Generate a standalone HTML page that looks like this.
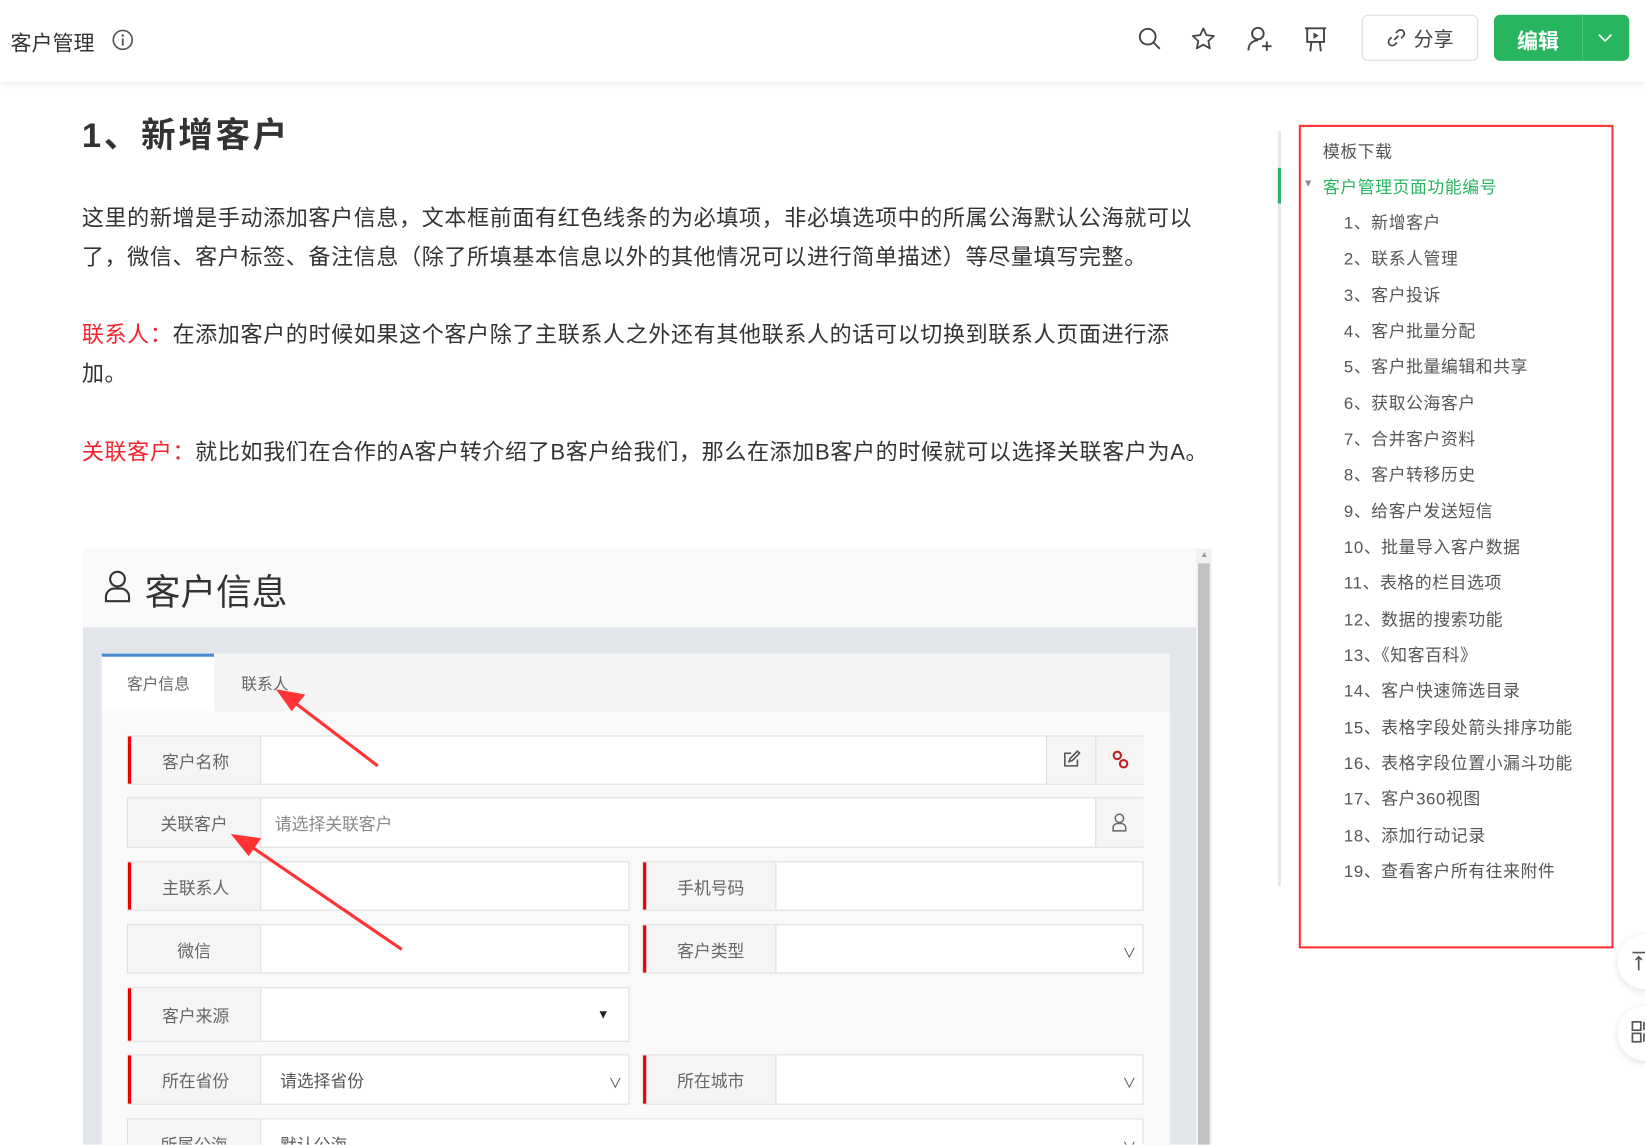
<!DOCTYPE html>
<html><head><meta charset="utf-8">
<style>
*{margin:0;padding:0;box-sizing:border-box}
html,body{width:1645px;height:1144px;overflow:hidden;background:#fff}
body{font-family:"Liberation Sans","Noto Sans CJK SC",sans-serif;color:#333}
#w{position:absolute;left:0;top:0;width:1568px;height:1091px;transform:scale(1.04911);transform-origin:0 0}
.a{position:absolute;white-space:nowrap}
.hdr{position:absolute;left:0;top:0;width:1568px;height:78px;background:#fff;box-shadow:0 2px 6px rgba(0,0,0,.08)}
p.t{position:absolute;left:78px;width:1070px;font-size:21px;letter-spacing:.6px;line-height:37px;color:#333;white-space:normal}
.red{color:#f5222d}
.toc div{position:absolute;font-size:16px;letter-spacing:.6px;color:#555;white-space:nowrap}
.row{position:absolute;height:47px;border:1px solid #ddd;background:#fff}
.row .lb{position:absolute;left:0;top:0;bottom:0;width:127px;background:#f5f5f5;border-right:1px solid #ddd;font-size:16px;color:#666;text-align:center;display:flex;align-items:center;justify-content:center}
.row.r .lb{border-left:3px solid #e00}
.row .ph{position:absolute;left:140px;top:0;bottom:0;display:flex;align-items:center;font-size:16px;color:#888}
.chev{position:absolute;right:6px;top:50%;margin-top:-7px;font-size:13px;color:#555}
</style></head><body><div id="w">
<div class="hdr">
 <div class="a" style="left:10px;top:25px;font-size:20px;color:#333">客户管理</div>
 <svg class="a" style="left:106px;top:27px" width="22" height="22" viewBox="0 0 22 22"><circle cx="11" cy="11" r="9" fill="none" stroke="#555" stroke-width="1.6"/><circle cx="11" cy="6.8" r="1.2" fill="#555"/><path d="M11 9.5v7" stroke="#555" stroke-width="1.7"/></svg>
 <svg class="a" style="left:1084px;top:25px" width="24" height="24" viewBox="0 0 24 24" fill="none" stroke="#444" stroke-width="1.8"><circle cx="10" cy="10" r="7.5"/><path d="M15.5 15.5l6 6"/></svg>
 <svg class="a" style="left:1135px;top:25px" width="24" height="24" viewBox="0 0 24 24" fill="none" stroke="#444" stroke-width="1.7" stroke-linejoin="round"><path d="M12 2l3 6.5 7 .8-5.2 4.8 1.4 7L12 17.6 5.8 21.1l1.4-7L2 9.3l7-.8z"/></svg>
 <svg class="a" style="left:1188px;top:24px" width="26" height="26" viewBox="0 0 26 26" fill="none" stroke="#444" stroke-width="1.8"><circle cx="11" cy="8" r="5.5"/><path d="M2 24c0-6 4-9.5 9-9.5M15 20h9M19.5 15.5v9"/></svg>
 <svg class="a" style="left:1242px;top:25px" width="24" height="26" viewBox="0 0 24 26" fill="none" stroke="#444" stroke-width="1.8"><path d="M2 2h20M4 2v13h16V2M8 15l-1 9M16 15l1 9"/><path d="M10 6l5 3-5 3z" fill="#444" stroke="none"/></svg>
 <div class="a" style="left:1298px;top:14px;width:111px;height:44px;border:1px solid #ddd;border-radius:6px;font-size:19px;color:#444;display:flex;align-items:center;justify-content:center"><svg width="20" height="20" viewBox="0 0 20 20" fill="none" stroke="#444" stroke-width="1.6" style="margin-right:6px"><path d="M8 12l4-4M9.5 5.5l2-2a3.5 3.5 0 015 5l-2 2M10.5 14.5l-2 2a3.5 3.5 0 01-5-5l2-2"/></svg>分享</div>
 <div class="a" style="left:1424px;top:14px;width:129px;height:44px;border-radius:6px;background:#27b560"></div>
 <div class="a" style="left:1424px;top:23px;width:84px;text-align:center;font-size:20px;color:#fff;font-weight:bold">编辑</div>
 <div class="a" style="left:1508px;top:14px;width:1px;height:44px;background:#4cc47c"></div>
 <svg class="a" style="left:1523px;top:31px" width="14" height="10" viewBox="0 0 14 10" fill="none" stroke="#fff" stroke-width="1.6"><path d="M1 2l6 6 6-6"/></svg>
</div>

<div class="a" style="left:78px;top:102px;font-size:33px;letter-spacing:2.5px;color:#333;font-weight:bold">1、新增客户</div>
<p class="t" style="top:190px">这里的新增是手动添加客户信息，文本框前面有红色线条的为必填项，非必填选项中的所属公海默认公海就可以了，微信、客户标签、备注信息（除了所填基本信息以外的其他情况可以进行简单描述）等尽量填写完整。</p>
<p class="t" style="top:301px"><span class="red">联系人：</span>在添加客户的时候如果这个客户除了主联系人之外还有其他联系人的话可以切换到联系人页面进行添加。</p>
<p class="t" style="top:413px;width:1100px"><span class="red">关联客户：</span>就比如我们在合作的A客户转介绍了B客户给我们，那么在添加B客户的时候就可以选择关联客户为A。</p>

<div class="a" style="left:79px;top:523px;width:1061px;height:568px;background:#e2e6ea;overflow:hidden">
 <div class="a" style="left:0;top:0;width:1061px;height:75px;background:#fafafa"></div>
 <svg class="a" style="left:20px;top:20px" width="26" height="32" viewBox="0 0 26 32" fill="none" stroke="#333" stroke-width="2"><circle cx="13" cy="9" r="7"/><path d="M2 30v-4a8 8 0 018-8h6a8 8 0 018 8v4z"/></svg>
 <div class="a" style="left:59px;top:14px;font-size:34px;color:#333">客户信息</div>
 <div class="a" style="left:18px;top:100px;width:1018px;height:480px;background:#f9f9f9"></div>
 <div class="a" style="left:18px;top:100px;width:1018px;height:55px;background:#f4f4f4"></div>
 <div class="a" style="left:18px;top:100px;width:107px;height:55px;background:#fff;border-top:3px solid #4a8ad0"></div>
 <div class="a" style="left:42px;top:118px;font-size:15px;color:#666">客户信息</div>
 <div class="a" style="left:151px;top:118px;font-size:15px;color:#666">联系人</div>
</div>
<div class="row r" style="left:121px;top:701px;width:969px"><div class="lb">客户名称</div>
 <div class="a" style="left:875px;top:0;width:47px;height:45px;background:#f5f5f5;border-left:1px solid #ddd"><svg style="margin:13px 0 0 14px" width="18" height="18" viewBox="0 0 18 18" fill="none" stroke="#555" stroke-width="1.5"><path d="M9 3H3v12h12V9M7 11l1-3 7-7 2 2-7 7z"/></svg></div>
 <div class="a" style="left:922px;top:0;width:46px;height:45px;background:#f5f5f5;border-left:1px solid #ddd"><svg style="margin:12px 0 0 14px" width="18" height="20" viewBox="0 0 18 20" fill="none" stroke="#b22" stroke-width="2"><circle cx="6" cy="6" r="3.5"/><circle cx="12" cy="14" r="3.5"/></svg></div>
</div>
<div class="row" style="left:121px;top:760px;width:969px;height:48px"><div class="lb">关联客户</div><div class="ph">请选择关联客户</div>
 <div class="a" style="left:922px;top:0;width:46px;height:46px;background:#f5f5f5;border-left:1px solid #ddd"><svg style="margin:14px 0 0 15px" width="14" height="18" viewBox="0 0 14 18" fill="none" stroke="#666" stroke-width="1.4"><circle cx="7" cy="5" r="4"/><path d="M1 17v-3a4 4 0 014-4h4a4 4 0 014 4v3z"/></svg></div></div>
<div class="row r" style="left:121px;top:821px;width:479px"><div class="lb">主联系人</div></div>
<div class="row r" style="left:612px;top:821px;width:478px"><div class="lb">手机号码</div></div>
<div class="row" style="left:121px;top:881px;width:479px"><div class="lb">微信</div></div>
<div class="row r" style="left:612px;top:881px;width:478px"><div class="lb">客户类型</div><div class="chev">∨</div></div>
<div class="row r" style="left:121px;top:941px;width:479px;height:52px"><div class="lb">客户来源</div><div class="a" style="right:18px;top:18px;font-size:12px;color:#222">▼</div></div>
<div class="row r" style="left:121px;top:1005px;width:479px;height:48px"><div class="lb">所在省份</div><div class="ph" style="left:145px;color:#555">请选择省份</div><div class="chev">∨</div></div>
<div class="row r" style="left:612px;top:1005px;width:478px;height:48px"><div class="lb">所在城市</div><div class="chev">∨</div></div>
<div class="a" style="left:121px;top:1066px;width:969px;height:25px;overflow:hidden">
 <div class="row" style="left:0;top:0;width:969px;height:48px"><div class="lb">所属公海</div><div class="ph" style="left:145px;color:#555">默认公海</div><div class="chev">∨</div></div>
</div>
<div class="a" style="left:1140px;top:523px;width:15px;height:568px;background:#f1f1f1"></div>
<div class="a" style="left:1142px;top:537px;width:11px;height:554px;background:#c1c1c1"></div>
<div class="a" style="left:1144px;top:524px;font-size:8px;color:#999">▲</div>

<svg class="a" style="left:0;top:0" width="1568" height="1091" viewBox="0 0 1568 1091">
 <path d="M360 730L280 669" stroke="#f33" stroke-width="3"/><path d="M263 657l28 5-13 16z" fill="#f33"/>
 <path d="M383 905L238 806" stroke="#f33" stroke-width="3"/><path d="M220 795l29 4-12 17z" fill="#f33"/>
</svg>

<div class="a" style="left:1218px;top:125px;width:3px;height:720px;background:#e8e8e8"></div>
<div class="a" style="left:1218px;top:160px;width:3px;height:34px;background:#27b560"></div>
<div class="a" style="left:1238px;top:119px;width:300px;height:785px;border:2px solid #f33"></div>
<div class="toc">
 <div style="left:1261px;top:131px">模板下载</div>
 <div style="left:1242px;top:170px;font-size:10px;color:#888">▼</div>
 <div style="left:1261px;top:165px;color:#27b560">客户管理页面功能编号</div>
 <div style="left:1281px;top:199px">1、新增客户</div>
 <div style="left:1281px;top:233px">2、联系人管理</div>
 <div style="left:1281px;top:268px">3、客户投诉</div>
 <div style="left:1281px;top:302px">4、客户批量分配</div>
 <div style="left:1281px;top:336px">5、客户批量编辑和共享</div>
 <div style="left:1281px;top:371px">6、获取公海客户</div>
 <div style="left:1281px;top:405px">7、合并客户资料</div>
 <div style="left:1281px;top:439px">8、客户转移历史</div>
 <div style="left:1281px;top:474px">9、给客户发送短信</div>
 <div style="left:1281px;top:508px">10、批量导入客户数据</div>
 <div style="left:1281px;top:542px">11、表格的栏目选项</div>
 <div style="left:1281px;top:577px">12、数据的搜索功能</div>
 <div style="left:1281px;top:611px">13、《知客百科》</div>
 <div style="left:1281px;top:645px">14、客户快速筛选目录</div>
 <div style="left:1281px;top:680px">15、表格字段处箭头排序功能</div>
 <div style="left:1281px;top:714px">16、表格字段位置小漏斗功能</div>
 <div style="left:1281px;top:748px">17、客户360视图</div>
 <div style="left:1281px;top:783px">18、添加行动记录</div>
 <div style="left:1281px;top:817px">19、查看客户所有往来附件</div>
</div>
<div class="a" style="left:1542px;top:891px;width:52px;height:52px;border-radius:50%;background:#fff;box-shadow:0 2px 8px rgba(0,0,0,.12)"></div>
<div class="a" style="left:1542px;top:959px;width:52px;height:52px;border-radius:50%;background:#fff;box-shadow:0 2px 8px rgba(0,0,0,.12)"></div>
<svg class="a" style="left:1556px;top:906px" width="12" height="20" viewBox="0 0 12 20" fill="none" stroke="#555" stroke-width="1.6"><path d="M0 2h12M6 6v13M3 9l3-3 3 3"/></svg>
<svg class="a" style="left:1555px;top:973px" width="13" height="22" viewBox="0 0 13 22" fill="none" stroke="#555" stroke-width="1.6"><rect x="1" y="1" width="8" height="8"/><rect x="1" y="12" width="8" height="8"/><path d="M12 1v8M12 12v8"/></svg>
</div></body></html>
